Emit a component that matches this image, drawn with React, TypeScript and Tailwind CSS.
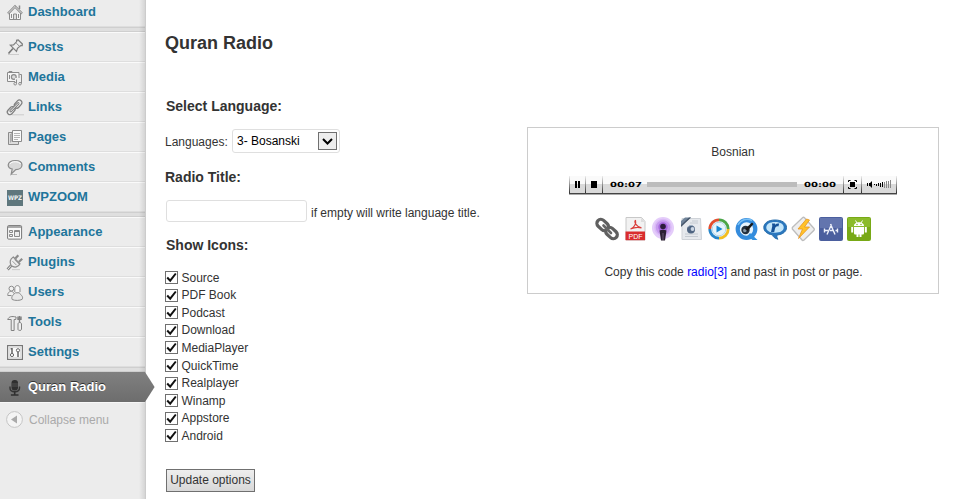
import React from "react";

type IconName =
  | "dashboard" | "posts" | "media" | "links" | "pages" | "comments" | "wpzoom"
  | "appearance" | "plugins" | "users" | "tools" | "settings" | "radio";

const S = "#8b8b8b";

function MenuIcon({ name }: { name: IconName }) {
  const glyphs: Record<IconName, React.ReactNode> = {
    dashboard: (
      <>
        <path d="M2.5 9v6.5h11V9" fill="#f4f4f4" stroke={S} />
        <path d="M1 9.6 8 2.4l7 7.2" fill="none" stroke={S} strokeWidth="2.4" />
        <path d="M1.2 9.3 8 2.5l6.8 6.8" fill="none" stroke="#f6f6f6" strokeWidth=".8" />
        <path d="M12.5 5V1.5" stroke={S} strokeWidth="1.5" />
        <path d="M6.5 15V10h3v5M4.5 10v4M11.5 10v4" fill="#ddd" stroke={S} />
      </>
    ),
    posts: (
      <>
        <path d="M1 15.5h11" stroke="#ccc" />
        <path d="m1.500 14.500 4.400-5" stroke="#777" strokeWidth="1.6" />
        <path d="m3.300 6.200 6.200 6.200 1-3 3.500-3 1.200.2.200-1.600-4.200-4-1.600.2.100 1.400-3.200 3.300Z" fill="#eee" stroke="#7f7f7f" strokeWidth="1.200" />
        <path d="m9.400 4.200 3.600 3.600" stroke={S} />
      </>
    ),
    media: (
      <g transform="translate(0 1)">
        <path d="M2 3V1.500h3V3" fill="none" stroke={S} />
        <path d="M.5 2.500h11.500v9H.5Z" fill="#f5f5f5" stroke={S} />
        <circle cx="6.800" cy="7" r="2.400" fill="#ddd" stroke={S} strokeWidth="1.200" />
        <path d="M2.500 5v4" fill="none" stroke={S} />
        <path d="M9.500 13.500V9.500h4.500v4" fill="#eee" stroke="#eee" strokeWidth="3" />
        <path d="M9.500 13.500V9.500M14.500 13.500V4.500h-2" fill="none" stroke={S} />
        <circle cx="8.200" cy="13.700" r="1.300" fill="#eee" stroke={S} />
        <circle cx="13" cy="13.700" r="1.300" fill="#eee" stroke={S} />
      </g>
    ),
    links: (
      <g fill="none">
        <path d="M5 15.800h12" stroke="#ccc" />
        <rect x="6.500" y="2.500" width="9" height="5.200" rx="2.600" transform="rotate(-48 11 5)" fill="#eee" stroke="#808080" strokeWidth="1.300" />
        <rect x="-.3" y="9" width="9" height="5.200" rx="2.600" transform="rotate(-48 4.200 11.600)" fill="#eee" stroke="#808080" strokeWidth="1.300" />
        <path d="m3.700 12 7.500-7.500" stroke="#808080" strokeWidth="2.600" strokeLinecap="round" />
        <path d="m3.700 12 7.500-7.500" stroke="#f0f0f0" strokeLinecap="round" />
      </g>
    ),
    pages: (
      <>
        <path d="M1.500 3.500H5v9h6.500v3h-10Z" fill="#ddd" stroke={S} />
        <path d="M5.500 1.500h9v11h-9Z" fill="#fafafa" stroke={S} />
        <path d="M7 4.500h6M7 6.500h6M7 8.500h6M7 10.500h4" stroke="#b5b5b5" />
        <path d="M3.500 5v8.500" stroke="#aaa" />
      </>
    ),
    comments: (
      <>
        <path d="M4 15.500h6" stroke="#bbb" />
        <path d="M8.200 1.500c4 0 6.800 1.700 6.800 4.400s-2.700 4.600-6.200 4.700L4.200 15l1-5C2.700 9.300 1.200 7.900 1.200 5.900c0-2.700 3-4.400 7-4.400Z" fill="#d8d8d8" stroke={S} strokeWidth="1.200" />
        <path d="M3 5c1-3 9.500-3 10.500 0" fill="none" stroke="#fff" />
      </>
    ),
    wpzoom: (
      <g transform="translate(0 1)">
        <path fill="#5f777d" d="M0 0h16v16H0z" />
        <text x="1" y="10.200" fill="#eff3f4" fontFamily="DejaVu Sans" fontSize="6.300" textLength="14" lengthAdjust="spacingAndGlyphs">WPZ</text>
      </g>
    ),
    appearance: (
      <>
        <rect x=".6" y="1.600" width="14" height="13.500" rx="1" fill="#fafafa" stroke="#777" />
        <path d="M1 3h13.500" stroke="#888" strokeWidth="1.400" />
        <path d="M2.500 6.500h3v2h-3ZM2.500 10.500h3v2h-3ZM7.500 6.500h5v6h-5Z" fill="#ececec" stroke={S} />
        <path d="M8 7.500h4" stroke="#888" />
      </>
    ),
    plugins: (
      <>
        <path d="M5 15.600h8" stroke="#ccc" />
        <path d="m4.600 11-4 4.500" stroke="#858585" strokeWidth="2.800" />
        <path d="m4.600 11-4 4.500" stroke="#eee" strokeWidth=".9" />
        <path d="m8.300 4.500 3-3.300M11.800 8l3.400-3.300" stroke={S} strokeWidth="2.200" />
        <path d="M6.300 3 13 9.800c-1.600 3.400-5.400 4.200-8.700 2C2.200 8.700 3 5 6.300 3Z" fill="#ededed" stroke={S} strokeWidth="1.200" />
        <path d="m7.500 5.600 4.500 4.500M5.500 7.200l4 4" stroke="#999" />
      </>
    ),
    users: (
      <g transform="translate(0 1)">
        <circle cx="4.400" cy="3.600" r="2.400" fill="#f1f1f1" stroke={S} />
        <path d="M4.500 10.500H.8c-.6-5 6.200-5.400 6.500-1" fill="#f1f1f1" stroke={S} />
        <path d="M7.800 7V3.600c0-4 5.200-4 5.200 0V7" fill="#f7f7f7" stroke={S} />
        <path d="M5.200 14.500c-1.500-3.700 1.600-4.700 3.100-6.700h4c1.200 2.300 4.400 3.200 2.900 6.500-2.200 1.400-7.500 1.500-10 .2Z" fill="#e9e9e9" stroke={S} />
      </g>
    ),
    tools: (
      <g transform="translate(0 1)">
        <path d="M.7 4.500c1.300-3.200 4-3.400 8.400-2.500l-.3 2.500H7.100v11H4.200v-11H2Z" fill="#ececec" stroke="#808080" />
        <path d="M12.500 8V1M11 1.500v2.800h3V1.500" fill="none" stroke="#808080" strokeWidth="1.400" />
        <path d="M11 9c0-2 3.500-2 3.500 0v5.500c0 1.200-3.500 1.200-3.500 0Z" fill="#eee" stroke="#808080" />
      </g>
    ),
    settings: (
      <>
        <rect x=".6" y="1.600" width="14.800" height="13.800" fill="#fafafa" stroke="#777" strokeWidth="1.200" />
        <rect x="2.200" y="3.200" width="11.600" height="10.600" fill="none" stroke="#d5d5d5" />
        <path d="M5 4v5M3.600 4.700H5M11 8v5" stroke="#666" strokeWidth="1.500" />
        <circle cx="5" cy="11" r="1.600" fill="#fff" stroke="#666" />
        <circle cx="11" cy="6.300" r="1.600" fill="#fff" stroke="#666" />
      </>
    ),
    radio: (
      <g transform="translate(-.5 2)">
        <rect x="5" y="0" width="6.500" height="10.500" rx="3" fill="#2f2f2f" />
        <path d="M3.500 6.500V8c0 5 9.500 5 9.500 0V6.500" fill="none" stroke="#343434" strokeWidth="1.400" />
        <path d="M8.200 11.500V15M4.400 15h7.600" stroke="#2f2f2f" strokeWidth="1.600" />
        <path d="M5 4h6.500M5 6h6.500" stroke="#5a5a5a" strokeWidth=".8" />
      </g>
    ),
  };
  return (
    <svg className="mt-[6px] h-4 w-4 shrink-0 overflow-visible" viewBox="0 0 16 16">
      {glyphs[name]}
    </svg>
  );
}

function MenuRow({ icon, label }: { icon: IconName; label: string }) {
  return (
    <a className="flex h-[30px] border-t border-b border-t-[#fafafa] border-b-[#dedede] pl-[7px] text-[13px] font-bold text-[#21759b]">
      <MenuIcon name={icon} />
      <span className="ml-[5px] leading-[28px] whitespace-nowrap">{label}</span>
    </a>
  );
}

function Separator() {
  return <div className="h-[5px] border-t border-b border-t-[#cfcfcf] border-b-[#cfcfcf] bg-[#dfdfdf]" />;
}

function Sidebar() {
  return (
    <nav className="relative h-[499px] w-[146px] shrink-0 border-r border-r-[#ccc] bg-[#ececec]">
      <div className="-mt-[3px]">
        <MenuRow icon="dashboard" label="Dashboard" />
        <Separator />
        <MenuRow icon="posts" label="Posts" />
        <MenuRow icon="media" label="Media" />
        <MenuRow icon="links" label="Links" />
        <MenuRow icon="pages" label="Pages" />
        <MenuRow icon="comments" label="Comments" />
        <MenuRow icon="wpzoom" label="WPZOOM" />
        <Separator />
        <MenuRow icon="appearance" label="Appearance" />
        <MenuRow icon="plugins" label="Plugins" />
        <MenuRow icon="users" label="Users" />
        <MenuRow icon="tools" label="Tools" />
        <MenuRow icon="settings" label="Settings" />
        <Separator />
        <a className="relative z-10 flex h-[30px] bg-gradient-to-b from-[#808080] to-[#6d6d6d] pl-[7px] text-[13px] font-bold text-white [text-shadow:0_-1px_0_#333]">
          <MenuIcon name="radio" />
          <span className="ml-[5px] leading-[29px] whitespace-nowrap">Quran Radio</span>
          <svg className="absolute top-0 left-[145px] h-[30px] w-[10px]" viewBox="0 0 10 30">
            <defs>
              <linearGradient id="arrow" x1="0" y1="0" x2="0" y2="1">
                <stop stopColor="#808080" />
                <stop offset="1" stopColor="#6d6d6d" />
              </linearGradient>
            </defs>
            <path d="M0 0 9.6 15 0 30Z" fill="url(#arrow)" />
          </svg>
        </a>
        <div className="flex h-[34px] items-center border-t border-t-[#f7f7f7] pl-[6px] text-[12px] text-[#aaa]">
          <svg className="h-[18px] w-[18px]" viewBox="0 0 18 18">
            <circle cx="8.500" cy="8.500" r="7.900" fill="#f4f4f4" stroke="#c5c5c5" />
            <path d="m5 8.500 6-4v8Z" fill="#aaa" />
          </svg>
          <span className="ml-[5px] whitespace-nowrap">Collapse menu</span>
        </div>
      </div>
      <div className="absolute inset-y-0 right-0 w-[6px] bg-gradient-to-r from-transparent to-black/10" />
    </nav>
  );
}

const options = ["Source", "PDF Book", "Podcast", "Download", "MediaPlayer", "QuickTime", "Realplayer", "Winamp", "Appstore", "Android"];

function CheckRow({ label }: { label: string }) {
  return (
    <label className="flex h-[17.6px] items-center">
      <svg className="h-[13px] w-[13px]" viewBox="0 0 13 13">
        <rect x=".5" y=".5" width="12" height="12" fill="#fff" stroke="#707070" />
        <path d="m2.200 6.500 3 3.200L10.800 2.500" fill="none" stroke="#111" strokeWidth="2" />
      </svg>
      <span className="ml-[3.5px] leading-[16px]">{label}</span>
    </label>
  );
}

function SettingsForm() {
  return (
    <form className="w-[362px] pl-[19px]">
      <h2 className="mt-[31px] text-[18px] leading-[24px] font-bold">Quran Radio</h2>
      <h3 className="mt-[41px] ml-px text-[14px] leading-[20px] font-bold">Select Language:</h3>
      <div className="mt-[13px] flex h-6 items-center">
        <span className="w-[67px] pt-[2px]">Languages:</span>
        <div className="flex h-6 w-[108px] items-center justify-between rounded-[3px] border border-[#dfdfdf] pr-[2px] pl-1 text-black">
          <span className="whitespace-nowrap">3- Bosanski</span>
          <span className="flex h-[18px] w-[19px] items-center justify-center border border-[#707070] bg-[#eee]">
            <svg className="h-[9px] w-[13px]" viewBox="0 0 13 9">
              <path d="m2 2 4.500 4.500L11 2" fill="none" stroke="#000" strokeWidth="2" />
            </svg>
          </span>
        </div>
      </div>
      <h3 className="mt-[14px] text-[14px] leading-[20px] font-bold">Radio Title:</h3>
      <div className="mt-[13px] ml-px flex h-[22px] items-center">
        <input className="h-[22px] w-[141px] rounded-[3px] border border-[#dfdfdf] bg-white" />
        <span className="mt-[4px] ml-1 whitespace-nowrap">if empty will write language title.</span>
      </div>
      <h3 className="mt-[13px] ml-px text-[14px] leading-[20px] font-bold">Show Icons:</h3>
      <div className="mt-[13.8px]">
        {options.map((label) => <CheckRow key={label} label={label} />)}
      </div>
      <button type="button" className="mt-[24.2px] ml-px h-[23px] w-[89px] border border-[#707070] bg-gradient-to-b from-[#eee] to-[#d8d8d8] whitespace-nowrap">
        Update options
      </button>
    </form>
  );
}

function Player() {
  return (
    <svg className="h-[19px] w-[328px]" viewBox="0 0 328 19">
      <defs>
        <linearGradient id="edge" x1="0" y1="0" x2="0" y2="1">
          <stop stopColor="#eee" />
          <stop offset="1" stopColor="#333" />
        </linearGradient>
      </defs>
      <path fill="#fafafa" d="M0 0h328v8H0z" />
      <path fill="#dadada" d="M0 8h328v9H0z" />
      <path fill="#444" d="M0 17h328v1H0z" />
      <path fill="#aaa" d="M0 18h328v1H0z" />
      <path fill="url(#edge)" d="M0 0h1v17H0zM16 0h1v17h-1zM33 0h1v17h-1zM274 0h1v17h-1zM292 0h1v17h-1zM327 0h1v17h-1z" />
      <path d="M6 5h2v7H6zM9 5h2v7H9zM22 5h6v7h-6z" fill="#000" />
      <text x="41" y="11" fontFamily="DejaVu Sans" fontWeight="bold" fontSize="7" textLength="32" lengthAdjust="spacingAndGlyphs">00:07</text>
      <path fill="#bcbcbc" d="M78 6h150v5H78z" />
      <text x="235" y="11" fontFamily="DejaVu Sans" fontWeight="bold" fontSize="7" textLength="32" lengthAdjust="spacingAndGlyphs">00:00</text>
      <path d="M281 6h5v5h-5z" />
      <path d="M279.500 6V4.500h2M285.500 4.500h2V6M287.500 11v1.500h-2M281.500 12.500h-2V11" fill="none" stroke="#000" />
      <path d="M298 7h1v3h-1zM300 7h1l2-2v7l-2-2h-1zM305 8h1v1h-1zM307 8h1v2h-1zM309 7h1v3h-1zM311 7h1v4h-1zM313 6h1v5h-1z" />
      <path fill="#888" d="M315 6h1v6h-1zM317 5h1v7h-1zM319 5h1v7h-1zM321 4h1v8h-1z" />
    </svg>
  );
}

const badges: React.ReactNode[] = [
  <g key="source" fill="none" stroke="#606060" strokeWidth="3.200">
    <rect x="1.200" y="4" width="13" height="8" rx="4" transform="rotate(43 7.700 8)" />
    <rect x="10" y="12" width="13" height="8" rx="4" transform="rotate(43 16.500 16)" />
    <path d="m8.500 8.500 7.500 7.500" stroke="#666" strokeWidth="2.600" strokeLinecap="round" />
  </g>,
  <g key="pdf">
    <path d="M3 .5h15.500l3.500 4V23H3Z" fill="#f2f2f2" stroke="#c8c8c8" />
    <path d="M18 1v4h4" fill="#ddd" />
    <path d="M7.500 12c4-1 5.800-6 5-8.500-1.800.5.500 6.500 6 7.300-4.500-1-8.500 0-11 1.200Z" fill="none" stroke="#da3e3b" strokeWidth="1.200" />
    <path d="M2.500 14.500h19.500v8.700h-19.500z" fill="#d92d2e" />
    <text x="5.500" y="21.500" fill="#fff" fontFamily="Liberation Sans" fontSize="7.200" textLength="14" lengthAdjust="spacingAndGlyphs">PDF</text>
  </g>,
  <g key="podcast">
    <circle cx="12" cy="11" r="11" fill="#e4ccfa" />
    <circle cx="12" cy="10.500" r="8" fill="#c69aee" stroke="#d9b9f6" strokeWidth="1.500" />
    <circle cx="12" cy="10" r="4.700" fill="#a568dc" />
    <circle cx="12" cy="9.500" r="2.800" fill="#2d1c3c" />
    <path d="M8.500 13.500c2-1 5-1 7 0l-1.500 10h-4Z" fill="#2c2035" />
    <path d="M12 16v7" stroke="#796483" strokeWidth=".8" />
  </g>,
  <g key="download">
    <path d="M3 22.500V1.500h18.500l1 21Z" fill="#e6e9ed" stroke="#cfd3d8" />
    <path d="M2 9V4l4-3.500h6Z" fill="#71849a" />
    <path d="m2 8 8-7.500h2L2 10Z" fill="#46566a" />
    <path d="M13 4h6M11 6h8M6 17h13M6 19.500h13" stroke="#c4cad1" />
    <circle cx="12" cy="12.500" r="4" fill="#4e6481" />
    <circle cx="13.500" cy="12" r="1.900" fill="#cbd6e4" />
    <path d="M9 10c2-2 4-2 5-1" fill="none" stroke="#9eafc3" />
  </g>,
  <g key="media-player" fill="none">
    <circle cx="12" cy="12" r="10.800" fill="#edf5fa" />
    <path d="M2.800 12A9.200 9.200 0 0 1 12 2.800" stroke="#e54d2c" strokeWidth="2.800" />
    <path d="M12 2.800a9.200 9.200 0 0 1 9.200 9.200" stroke="#4ca647" strokeWidth="2.800" />
    <path d="M21.200 12a9.200 9.200 0 0 1-9.200 9.200" stroke="#f3be20" strokeWidth="2.800" />
    <path d="M12 21.200A9.200 9.200 0 0 1 2.800 12" stroke="#2585c9" strokeWidth="2.800" />
    <circle cx="12" cy="12" r="6.800" fill="#e6f4fb" stroke="#b4d5e7" />
    <path d="m9.500 8.500 6 3.500-6 3.500Z" fill="#1786cf" />
  </g>,
  <g key="quicktime">
    <circle cx="11.500" cy="12" r="8.800" fill="#e7f4fd" stroke="#348bdc" strokeWidth="4.200" />
    <path d="m15 16 7.500 7h-5l-5-4Z" fill="#3290df" />
    <circle cx="10.500" cy="13" r="4.200" fill="#222f3d" />
    <circle cx="9.800" cy="13.500" r="1.800" fill="#8395a5" />
    <path d="m10 12 7-6.500 1.500 1.500-6 7Z" fill="#181818" />
    <path d="M3 8a10 10 0 0 1 14-4.500" fill="none" stroke="#77bff5" strokeWidth="1.500" />
  </g>,
  <g key="realplayer">
    <path d="M12 3C5 3 .8 6.300.8 10.500c0 3.700 3.500 6.800 8.700 7.300.5 2.200 2.500 3.700 5.500 4.400-1-1.200-1.500-2.800-1-4.200 6-.5 9.500-3.500 9.500-7.500C23.500 6 19 3 12 3Z" fill="#2a77bf" stroke="#246caa" />
    <path d="M12 5c-5.500 0-8.700 2.200-8.700 5.500s3.300 5.200 8.700 5.200 8.700-2 8.700-5.200S17.500 5 12 5Z" fill="#c4e6fa" />
    <path d="M9 6.500h3l.2 1.200c1.100-1.200 2.600-1.500 4-1.100l-.8 2.800c-2-.5-3 .6-3.500 2.500L11.200 15H8l1.300-6Z" fill="#155299" />
  </g>,
  <g key="winamp">
    <path d="M1.300 10.500 11.500.7c.7-.6 1.300-.6 2 .1L23 11.500c.5.700.5 1.200 0 1.800L12.800 23.200c-.7.500-1.300.5-1.800-.2L1.300 12Z" fill="#eee" stroke="#bdbdbd" strokeWidth="1.300" />
    <path d="M15.500 2 7 12h4.500l-4 9.500L18.500 10h-5L18.500 3Z" fill="#ffc229" stroke="#e8951e" strokeWidth=".8" />
  </g>,
  <g key="appstore">
    <rect width="24" height="24" rx="2" fill="#4b5f9e" />
    <path fill="#6375ae" d="M1 1h22v10H1z" />
    <path d="m8 17.500 4.500-10M11.500 7 16 17.500M5 13.500h4M11 13.500h3.500M16.500 13.500H19M5.500 11.500v4M18.500 11.500v4" fill="none" stroke="#eef1fa" strokeWidth="1.400" />
  </g>,
  <g key="android">
    <rect width="24" height="24" rx="2" fill="#78a916" />
    <path fill="#8bbb2a" d="M1 1h22v9H1z" />
    <path d="M7 9c0-5 10-5 10 0ZM7 10h10v6c0 1-.5 1.500-1.500 1.500h-1V20h-2v-2.500h-1V20h-2v-2.500h-1C7.500 17.500 7 17 7 16ZM4.200 10h2v5.500h-2ZM17.800 10h2v5.500h-2Z" fill="#fff" />
    <path d="m8.500 3.500 1.500 2.500M15.500 3.500 14 6" stroke="#fff" />
    <circle cx="10" cy="7.500" r=".7" fill="#78a916" />
    <circle cx="14" cy="7.500" r=".7" fill="#78a916" />
  </g>,
];

function Preview() {
  return (
    <section className="mt-[127px] ml-[19px] flex h-[167px] w-[412px] flex-col items-center border border-[#ccc]">
      <p className="mt-[15px] leading-[18px]">Bosnian</p>
      <div className="mt-[15px] h-[19px]"><Player /></div>
      <div className="mt-[22px] flex h-6 gap-1">
        {badges.map((badge, i) => (
          <svg key={i} className="h-6 w-6 overflow-visible" viewBox="0 0 24 24">{badge}</svg>
        ))}
      </div>
      <p className="mt-[22px] ml-px leading-[18px] whitespace-nowrap">
        Copy this code <span className="text-[#0000ff]">radio[3]</span> and past in post or page.
      </p>
    </section>
  );
}

export default function App() {
  return (
    <main className="flex h-[499px] w-[956px] overflow-hidden bg-white font-['Liberation_Sans',Arial,sans-serif] text-[12px] text-[#333]">
      <Sidebar />
      <SettingsForm />
      <Preview />
    </main>
  );
}
